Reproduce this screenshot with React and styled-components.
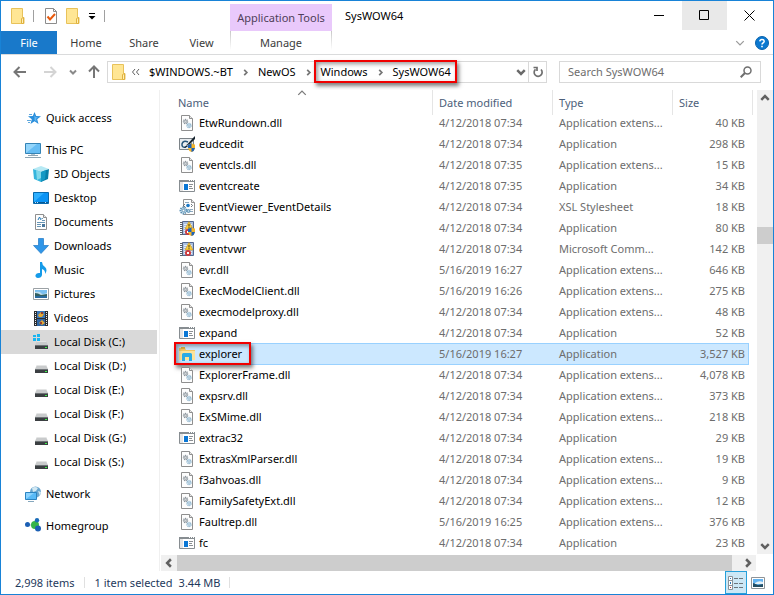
import styled, { createGlobalStyle, css } from "styled-components";

const files = [
  ["dll", "EtwRundown.dll", "4/12/2018 07:34", "Application extens...", "40 KB"],
  ["eudc", "eudcedit", "4/12/2018 07:34", "Application", "298 KB"],
  ["dll", "eventcls.dll", "4/12/2018 07:35", "Application extens...", "15 KB"],
  ["app", "eventcreate", "4/12/2018 07:35", "Application", "34 KB"],
  ["xsl", "EventViewer_EventDetails", "4/12/2018 07:34", "XSL Stylesheet", "18 KB"],
  ["eventShield", "eventvwr", "4/12/2018 07:34", "Application", "80 KB"],
  ["event", "eventvwr", "4/12/2018 07:34", "Microsoft Comm...", "142 KB"],
  ["dll", "evr.dll", "5/16/2019 16:27", "Application extens...", "646 KB"],
  ["dll", "ExecModelClient.dll", "5/16/2019 16:26", "Application extens...", "275 KB"],
  ["dll", "execmodelproxy.dll", "4/12/2018 07:34", "Application extens...", "48 KB"],
  ["app", "expand", "4/12/2018 07:34", "Application", "52 KB"],
  ["explorer", "explorer", "5/16/2019 16:27", "Application", "3,527 KB"],
  ["dll", "ExplorerFrame.dll", "4/12/2018 07:34", "Application extens...", "4,078 KB"],
  ["dll", "expsrv.dll", "4/12/2018 07:34", "Application extens...", "373 KB"],
  ["dll", "ExSMime.dll", "4/12/2018 07:34", "Application extens...", "218 KB"],
  ["app", "extrac32", "4/12/2018 07:34", "Application", "29 KB"],
  ["dll", "ExtrasXmlParser.dll", "4/12/2018 07:34", "Application extens...", "19 KB"],
  ["dll", "f3ahvoas.dll", "4/12/2018 07:34", "Application extens...", "9 KB"],
  ["dll", "FamilySafetyExt.dll", "4/12/2018 07:34", "Application extens...", "12 KB"],
  ["dll", "Faultrep.dll", "5/16/2019 16:25", "Application extens...", "376 KB"],
  ["app", "fc", "4/12/2018 07:34", "Application", "23 KB"],
];

const places = [
  [["star", "Quick access"]],
  [
    ["pc", "This PC"],
    ["cube", "3D Objects"],
    ["desktop", "Desktop"],
    ["document", "Documents"],
    ["download", "Downloads"],
    ["music", "Music"],
    ["picture", "Pictures"],
    ["video", "Videos"],
    ["system", "Local Disk (C:)"],
    ["disk", "Local Disk (D:)"],
    ["disk", "Local Disk (E:)"],
    ["disk", "Local Disk (F:)"],
    ["disk", "Local Disk (G:)"],
    ["disk", "Local Disk (S:)"],
  ],
  [["network", "Network"]],
  [["homegroup", "Homegroup"]],
];

const Shield = () => (
  <>
    <path d="M9 8.500q2 0 3.500-1.500 1.500 1.500 3.500 1.500v3.500q-.5 3-3.500 4-3-1-3.500-4z" fill="#f3b52b" />
    <path d="M12.500 7q-1.500 1.500-3.500 1.500V12h3.500zM12.500 12H16q-.5 3-3.500 4z" fill="#1f63b8" />
  </>
);

const EventLog = () => (
  <>
    <path d="M3.500 1.500h11v13h-11z" fill="#a9bfe0" stroke="#54678f" />
    <path d="M5 4.500h8M5 6.500h8M5 8.500h8M5 10.500h8M5 12.500h8" stroke="#e4edf9" />
    <path d="M1 2.500h3M1 4.500h3M1 6.500h3M1 8.500h3M1 10.500h3M1 12.500h3M1 14.500h3" stroke="#5b6069" />
    <path d="M10 1.500L14 9H6z" fill="#fbcf3b" stroke="#c99117" strokeWidth=".6" />
    <path d="M9.500 4h1v2.500h-1zM9.500 7.200h1v1h-1z" fill="#3c3112" />
    <circle cx="9" cy="12" r="3" fill="#cf3d3f" />
    <path d="M8 11l2 2M10 11l-2 2" stroke="#fff" />
  </>
);

const Drive = () => (
  <>
    <path d="M4 7h9l2 4H2z" fill="#c9cbcc" />
    <path d="M4 7h9l.5 1h-10z" fill="#e4e5e5" />
    <path d="M2 11h13v4H2z" fill="#3b3f42" />
    <path d="M2 11h13v1H2z" fill="#6e7376" />
    <path d="M12 13h2v1h-2z" fill="#3df24a" />
  </>
);

const Page = () => (
  <>
    <path d="M2.500.5h8l3 3v12h-11z" fill="#fdfdfd" stroke="#8f8f8f" />
    <path d="M10.500.5v3h3" fill="#e9e9e9" stroke="#8f8f8f" />
  </>
);

const artwork = {
  dll: (
    <>
      <Page />
      <circle cx="6.500" cy="6.500" r="2" fill="#d5d9dc" stroke="#8b949b" strokeDasharray="1 .6" strokeWidth="1.400" />
      <circle cx="6.500" cy="6.500" r=".8" fill="#fff" stroke="#8b949b" strokeWidth=".6" />
      <circle cx="10" cy="10.500" r="2" fill="#d8eaf5" stroke="#8db4cd" strokeDasharray="1 .6" strokeWidth="1.400" />
      <circle cx="10" cy="10.500" r=".8" fill="#fff" stroke="#7fa8c2" strokeWidth=".6" />
    </>
  ),
  app: (
    <>
      <path d="M.5 2.500h15v11H.5z" fill="#fff" stroke="#878d91" />
      <path d="M0 2h16v2H0z" fill="#878d91" />
      <path d="M10 2.500h1M12 2.500h1M14 2.500h1" stroke="#fff" />
      <path d="M1 4h3v9H1z" fill="#e5e5e5" />
      <path d="M5 6h4v6H5z" fill="#0a77d5" />
      <path d="M10 6.500h4M10 8.500h3M10 10.500h4" stroke="#8b8f93" />
    </>
  ),
  eudc: (
    <>
      <path d="M.5 2.500h14v11H.5z" fill="#e9edf0" stroke="#7c8388" />
      <path d="M9 6Q4 4 3 8q-.5 4 4 3" fill="none" stroke="#27567b" strokeWidth="1.500" />
      <path d="M5 12L14 2l2-2v3L8 11z" fill="#17242f" />
      <path d="M7 9l3 1" stroke="#8ca3b6" />
      <Shield />
    </>
  ),
  xsl: (
    <>
      <path d="M4.500.5h8l3 3v12h-11z" fill="#fdfdfd" stroke="#929292" />
      <path d="M12.500.5v3h3" fill="#e9e9e9" stroke="#929292" />
      <path d="M6 5l-1.500 1.500L6 8M12 5l1.500 1.500L12 8" fill="none" stroke="#4c555d" strokeWidth=".8" />
      <circle cx="9" cy="6.500" r="1.800" fill="#1978c8" />
      <path d="M11 10.500h3M11 12.500h3M6 3.500h4" stroke="#8ea9bf" />
      <circle cx="4.500" cy="11.500" r="3" fill="#dcebf5" stroke="#5b91b5" strokeDasharray="1.300 .8" strokeWidth="2" />
      <circle cx="4.500" cy="11.500" r="1.300" fill="#fff" stroke="#6698b8" />
      <circle cx="9.500" cy="12" r="1.500" fill="#b4d2e5" stroke="#5b91b5" />
    </>
  ),
  event: <EventLog />,
  eventShield: (
    <>
      <EventLog />
      <Shield />
    </>
  ),
  explorer: (
    <>
      <path d="M0 2h6l1 2h9v10H0z" fill="#f1c663" />
      <path d="M2 1h4v2H2z" fill="#e0ad3f" />
      <path d="M0 5h16v9H0z" fill="#fce39a" />
      <path d="M3 8.500q0-1.500 1.500-1.500h7q1.500 0 1.500 1.500V15h-3v-4H6v4H3z" fill="#29abe6" />
    </>
  ),
  star: (
    <>
      <path d="M9.500 2l1.700 4 4.800.2-3.800 3 1.300 4.800-4-2.700-4 2.700 1.300-4.800-3.800-3 4.800-.2z" fill="#2a8edb" />
      <path d="M9.500 5l1 2 2.500.2-2 1.600.7 2.700-2.200-1.600z" fill="#62b6f1" />
      <path d="M4 4.500h3M2 10.500h4M3 12.500h2" stroke="#62a9dd" />
    </>
  ),
  pc: (
    <>
      <path d="M.5 1.500h15v10H.5z" fill="#66bdf4" stroke="#3483b5" />
      <path d="M1 11V2h11z" fill="#93d5fb" />
      <path d="M6 12h4v2H6z" fill="#b3c5d0" />
      <path d="M3 13.500h10M0 15.500h16" stroke="#8ea5b3" />
    </>
  ),
  cube: (
    <>
      <path d="M0 3l8-3 8 3-8 3z" fill="#b6e9f4" />
      <path d="M0 3l8 3v10l-7-3z" fill="#35b5dc" />
      <path d="M16 3L8 6v10l7-3z" fill="#087fa8" />
      <path d="M3 4l5 2v6l-4 2z" fill="#7fd8ea" />
      <path d="M8 6l5-2-1 9-4 3z" fill="#1499c4" />
    </>
  ),
  desktop: (
    <>
      <path d="M.5 2.500h15v11H.5z" fill="#0b94f5" stroke="#0769ad" />
      <path d="M1 12V3h10z" fill="#2eb0ff" />
      <path d="M1 12h14v1H1z" fill="#075993" />
      <path d="M2 12h1v1H2zM4 12h1v1H4zM12 12h1v1h-1z" fill="#bfe5ff" />
    </>
  ),
  document: (
    <>
      <Page />
      <path d="M5 6l1.500-3L8 6" fill="none" stroke="#2478b5" />
      <path d="M8.500 4.500H10M9 6.500h3M4 8.500h8M4 10.500h4M4 12.500h4" stroke="#6795b5" />
      <path d="M9 10h3v3H9z" fill="#49779c" />
    </>
  ),
  download: <path d="M5.500.5h5v7h5L8 15.500.5 7.500h5z" fill="#2f96e8" stroke="#2078c4" strokeWidth=".7" />,
  music: (
    <path
      d="M7 0h2q0 3 3 5 3 3 0 7 .5-4-3-5v6q-.5 3-4 3-3-.5-2.500-3 1-2.500 4.500-2z"
      fill="#159be9"
    />
  ),
  picture: (
    <>
      <path d="M.5 2.500h15v11H.5z" fill="#fff" stroke="#9ba1a5" />
      <path d="M2 4h12v8H2z" fill="#79bff0" />
      <path d="M2 6q5-1 6 1t6 0v5H2z" fill="#bfdeee" />
      <path d="M2 7q3 0 6 2l6-1v2H2z" fill="#315f60" />
      <path d="M2 10h12v2H2z" fill="#28699e" />
    </>
  ),
  video: (
    <>
      <path d="M1 1h14v15H1z" fill="#2c2e31" />
      <path d="M4 1h8v7H4z" fill="#3976b8" />
      <path d="M4 9h8v7H4z" fill="#2f65a3" />
      <path d="M5 5l3-3 3 2-2 3H6zM6 13l3-3 3 3-3 2z" fill="#e2a835" />
      <path d="M8 2h2v2H8zM7 12h2v2H7z" fill="#9c3e2b" />
      <path d="M2.500 2v14M13.500 2v14" stroke="#eee" strokeDasharray="1 1" />
    </>
  ),
  disk: <Drive />,
  system: (
    <>
      <Drive />
      <path d="M0 1h3v2H0zM4 0h3v3H4zM0 4h3v3H0zM4 4h3v3H4z" fill="#18b5f1" />
    </>
  ),
  network: (
    <>
      <circle cx="10.500" cy="6" r="5.500" fill="#6aa6cf" />
      <path d="M7 2q3-2 6 0l-2 3-3 1zM13 5l3 1-1 4z" fill="#d3e9f3" />
      <path d="M.5 6.500h11v7H.5z" fill="#59baf7" stroke="#2b83c0" />
      <path d="M1 13V7h8z" fill="#8bd3ff" />
      <path d="M3 15.500h6" stroke="#85a7bd" />
    </>
  ),
  homegroup: (
    <>
      <path d="M3 7l7 0 2-5M10 7l3 5" stroke="#9bc9d6" fill="none" />
      <circle cx="10" cy="7" r="4" fill="#36b44a" />
      <circle cx="2.500" cy="6.500" r="2.500" fill="#1b5fb4" />
      <circle cx="12" cy="2.200" r="2.200" fill="#1a6cb8" />
      <circle cx="13" cy="10.500" r="3" fill="#1b5fb4" />
    </>
  ),
};

function Icon({ name }) {
  return (
    <IconBox viewBox="0 0 16 16" aria-hidden="true">
      {artwork[name]}
    </IconBox>
  );
}

function FolderIcon() {
  return (
    <FolderSvg viewBox="0 0 14 16" aria-hidden="true">
      <path d="M.5.5h11v9h1.500v6H.5z" fill="#ffe694" stroke="#e8c25a" />
      <path d="M10.500 15.500v-5l2-1v6z" fill="#fff0b8" stroke="#e0b23e" />
    </FolderSvg>
  );
}

function Chevron({ turn = 0, size = 8, color = "#606060", weight = 2 }) {
  return (
    <svg width={size} height={size} viewBox="0 0 8 8" aria-hidden="true">
      <path
        d="M1 2.500l3 3 3-3"
        fill="none"
        stroke={color}
        strokeWidth={weight}
        transform={`rotate(${turn} 4 4)`}
      />
    </svg>
  );
}

function TitleBar() {
  return (
    <Header>
      <QuickBar>
        <FolderIcon />
        <Divider />
        <ToolButton aria-label="Properties">
          <svg width="14" height="16" viewBox="0 0 14 16">
            <path d="M1.500.5h8l3 3v12h-11z" fill="#fff" stroke="#8c8c8c" />
            <path d="M9.500.5v3h3" fill="none" stroke="#8c8c8c" />
            <path d="M3.500 8.500l2.500 3 5-5.500" fill="none" stroke="#e8590c" strokeWidth="2" />
          </svg>
        </ToolButton>
        <ToolButton aria-label="New folder">
          <FolderIcon />
        </ToolButton>
        <ToolButton aria-label="Customize toolbar">
          <svg width="8" height="8" viewBox="0 0 8 8">
            <path d="M1 1.500h6" stroke="#000" />
            <path d="M.5 4h7L4 7.500z" />
          </svg>
        </ToolButton>
        <Divider />
      </QuickBar>
      <ToolsTab>Application Tools</ToolsTab>
      <Title>SysWOW64</Title>
      <WindowButton aria-label="Minimize">
        <svg width="11" height="11" viewBox="0 0 11 11">
          <path d="M0 5.500h10" stroke="#000" />
        </svg>
      </WindowButton>
      <WindowButton aria-label="Maximize" $hover>
        <svg width="11" height="11" viewBox="0 0 11 11">
          <path d="M.5.5h9v9h-9z" fill="none" stroke="#000" />
        </svg>
      </WindowButton>
      <WindowButton aria-label="Close">
        <svg width="11" height="11" viewBox="0 0 11 11">
          <path d="M.5.5l10 10M10.500.5l-10 10" stroke="#000" />
        </svg>
      </WindowButton>
    </Header>
  );
}

function Ribbon() {
  return (
    <RibbonBar>
      <Tab $file>File</Tab>
      <Tab>Home</Tab>
      <Tab>Share</Tab>
      <Tab>View</Tab>
      <Tab $tools>Manage</Tab>
      <RibbonEnd>
        <ToolButton aria-label="Expand ribbon">
          <Chevron color="#9a9a9a" size={10} weight={1} />
        </ToolButton>
        <ToolButton aria-label="Help">
          <svg width="14" height="14" viewBox="0 0 14 14">
            <circle cx="7" cy="7" r="6.500" fill="#0b78d0" stroke="#0a62ab" />
            <path d="M4.800 5.300Q5 3.400 7 3.400t2.200 1.800Q9.200 6.200 8 7q-1 .6-1 1.600" fill="none" stroke="#fff" strokeWidth="1.500" />
            <path d="M6.200 9.700h1.600v1.500H6.200z" fill="#fff" />
          </svg>
        </ToolButton>
      </RibbonEnd>
    </RibbonBar>
  );
}

function Navigation() {
  return (
    <NavBar>
      <Arrows>
        <ToolButton aria-label="Back">
          <svg width="14" height="12" viewBox="0 0 14 12">
            <path d="M13 6H2M6.500 1l-5 5 5 5" fill="none" stroke="#767676" strokeWidth="2" />
          </svg>
        </ToolButton>
        <ToolButton aria-label="Forward">
          <svg width="14" height="12" viewBox="0 0 14 12">
            <path d="M1 6h11M7.500 1l5 5-5 5" fill="none" stroke="#d4d4d4" strokeWidth="2" />
          </svg>
        </ToolButton>
        <ToolButton aria-label="Recent locations">
          <Chevron color="#8a8a8a" />
        </ToolButton>
        <ToolButton aria-label="Up">
          <svg width="12" height="14" viewBox="0 0 12 14">
            <path d="M6 13V2M1 6.500l5-5 5 5" fill="none" stroke="#767676" strokeWidth="2" />
          </svg>
        </ToolButton>
      </Arrows>
      <Address>
        <FolderIcon />
        <Crumbs>
          <svg width="9" height="8" viewBox="0 0 9 8" aria-hidden="true">
            <path d="M4 1L1.500 4 4 7M8 1L5.500 4 8 7" fill="none" stroke="#606060" />
          </svg>
          <Crumb>$WINDOWS.~BT</Crumb>
          <Chevron turn={-90} size={7} color="#757575" />
          <Crumb>NewOS</Crumb>
          <Chevron turn={-90} size={7} color="#757575" />
          <MarkedCrumbs>
            <Crumb>Windows</Crumb>
            <Chevron turn={-90} size={7} color="#757575" />
            <Crumb>SysWOW64</Crumb>
            <Outline />
          </MarkedCrumbs>
        </Crumbs>
        <ToolButton aria-label="Previous locations">
          <Chevron size={10} color="#6a6a6a" />
        </ToolButton>
        <Refresh aria-label="Refresh">
          <svg width="12" height="12" viewBox="0 0 12 12">
            <path d="M9 3.500a4 4 0 1 1-5.500-.2M1.500 1.500h3.500V5" fill="none" stroke="#6f6f6f" strokeWidth="1.700" />
          </svg>
        </Refresh>
      </Address>
      <Search>
        <SearchInput aria-label="Search SysWOW64" placeholder="Search SysWOW64" />
        <svg width="12" height="12" viewBox="0 0 12 12" aria-hidden="true">
          <circle cx="7.500" cy="4.500" r="3.500" fill="none" stroke="#6f6f6f" strokeWidth="1.500" />
          <path d="M5 7L.7 11.300" stroke="#6f6f6f" strokeWidth="2" />
        </svg>
      </Search>
    </NavBar>
  );
}

function Sidebar() {
  return (
    <Side>
      {places.map((group) => (
        <PlaceGroup key={group[0][1]}>
          {group.map(([icon, label], index) => (
            <li key={label}>
              <Place href="#" $nested={index > 0} $current={icon === "system"}>
                <Icon name={icon} />
                <span>{label}</span>
              </Place>
            </li>
          ))}
        </PlaceGroup>
      ))}
    </Side>
  );
}

function FileTable() {
  return (
    <Table>
      <thead>
        <HeadRow>
          <HeadCell $first>
            Name
            <SortMark>
              <Chevron turn={180} size={10} color="#7a7a7a" weight={1} />
            </SortMark>
          </HeadCell>
          <HeadCell>Date modified</HeadCell>
          <HeadCell>Type</HeadCell>
          <HeadCell>Size</HeadCell>
        </HeadRow>
      </thead>
      <tbody>
        {files.map(([icon, name, date, type, size], index) => (
          <FileRow key={index} $selected={name === "explorer"}>
            <NameCell>
              <Icon name={icon} />
              <span>{name}</span>
              {name === "explorer" && <Outline $row />}
            </NameCell>
            <Cell>{date}</Cell>
            <Cell>{type}</Cell>
            <Cell $right>{size}</Cell>
          </FileRow>
        ))}
      </tbody>
    </Table>
  );
}

function App() {
  return (
    <>
      <GlobalStyle />
      <Window>
        <TitleBar />
        <Ribbon />
        <Navigation />
        <Body>
          <Sidebar />
          <Pane>
            <FileTable />
            <VerticalBar>
              <ScrollButton aria-label="Scroll up">
                <Chevron turn={180} size={10} />
              </ScrollButton>
              <Gap $grow={120} />
              <Thumb $tall />
              <Gap $grow={293} />
              <ScrollButton aria-label="Scroll down">
                <Chevron size={10} />
              </ScrollButton>
            </VerticalBar>
            <HorizontalBar>
              <ScrollButton aria-label="Scroll left">
                <Chevron turn={90} size={10} />
              </ScrollButton>
              <Thumb />
              <Gap $size={8} />
              <ScrollButton aria-label="Scroll right">
                <Chevron turn={-90} size={10} />
              </ScrollButton>
            </HorizontalBar>
          </Pane>
        </Body>
        <Status>
          <StatusPart>2,998 items</StatusPart>
          <StatusPart>
            <span>1 item selected</span>
            <span>3.44 MB</span>
          </StatusPart>
          <ViewButtons>
            <ViewButton aria-label="Details" $active>
              <svg width="16" height="14" viewBox="0 0 16 14">
                <path d="M.5.5h4v13h-4zM.5 4.500h4M.5 9.500h4" fill="#fff" stroke="#8b9298" />
                <path d="M2 2h1v1H2zM2 6h1v2H2z" fill="#2d78b5" />
                <path d="M2 11h1v1H2z" fill="#b33c3c" />
                <path d="M6 2.500h4M11 2.500h4M6 7.500h4M11 7.500h4M6 11.500h4M11 11.500h4" stroke="#6d767c" />
              </svg>
            </ViewButton>
            <ViewButton aria-label="Large icons">
              <svg width="14" height="12" viewBox="0 0 14 12">
                <path d="M.5.5h13v11H.5z" fill="#fff" stroke="#8f9498" />
                <path d="M2 2h10v8H2z" fill="#64b3f0" />
                <path d="M4 6q4-3 8-1v2H4z" fill="#e5f1f7" />
                <path d="M2 6l5 2 5-1v3H2z" fill="#234d63" />
              </svg>
            </ViewButton>
          </ViewButtons>
        </Status>
      </Window>
    </>
  );
}

const GlobalStyle = createGlobalStyle`
  * {
    box-sizing: border-box;
  }
  body {
    margin: 0;
    background: #fff;
    color: #000;
    font-family: "Noto Sans", "Open Sans", sans-serif;
    font-size: 11px;
    line-height: 16px;
  }
  button, input {
    font: inherit;
    color: inherit;
    border: 0;
    padding: 0;
    background: none;
  }
  ul {
    list-style: none;
    margin: 0;
    padding: 0;
  }
  svg {
    display: block;
    flex: none;
  }
`;

const Window = styled.div`
  display: flex;
  flex-direction: column;
  min-height: 100vh;
  border: 1px solid #1883d7;
`;
const Header = styled.header`
  display: flex;
  height: 30px;
  padding-right: 1px;
`;
const QuickBar = styled.div`
  display: flex;
  align-items: center;
  gap: 8px;
  width: 229px;
  padding-left: 10px;
`;
const Divider = styled.span`
  width: 1px;
  height: 12px;
  margin-right: 2px;
  background: #a0a0a0;
`;
const ToolButton = styled.button`
  display: flex;
  align-items: center;
  justify-content: center;
`;
const IconBox = styled.svg`
  width: 16px;
  height: 16px;
`;
const FolderSvg = styled.svg`
  width: 14px;
  height: 16px;
`;
const ToolsTab = styled.div`
  width: 102px;
  margin-top: 3px;
  padding-top: 6px;
  text-align: center;
  white-space: nowrap;
  background: #e9c9fb;
  color: #4f4059;
`;
const Title = styled.div`
  flex: 1;
  padding: 7px 13px;
`;
const WindowButton = styled.button`
  display: flex;
  align-items: center;
  justify-content: center;
  width: 45px;
  height: 29px;
  background: ${({ $hover }) => ($hover ? "#e9e9e9" : "none")};
`;
const RibbonBar = styled.nav`
  display: grid;
  grid-template-columns: 56px 58px 58px 57px 102px 1fr;
  height: 24px;
  border-bottom: 1px solid #dadbdc;
`;
const Tab = styled.button`
  color: #3b3b3b;
  ${({ $file }) =>
    $file &&
    css`
      background: #1979ca;
      color: #fff;
    `}
  ${({ $tools }) =>
    $tools &&
    css`
      border: solid transparent;
      border-width: 0 1px;
      border-image: linear-gradient(#c4c4c4, #fff 80%) 1;
    `}
`;
const RibbonEnd = styled.div`
  display: flex;
  align-items: center;
  justify-content: flex-end;
  gap: 10px;
  padding-right: 4px;
`;
const NavBar = styled.div`
  display: flex;
  height: 35px;
  padding: 6px 12px 7px 0;
`;
const Arrows = styled.div`
  display: grid;
  grid-template-columns: 30px 29px 18px 24px;
  width: 106px;
  padding-left: 4px;
`;
const Address = styled.div`
  display: flex;
  align-items: center;
  flex: 1;
  padding-left: 4px;
  border: 1px solid #d9d9d9;
`;
const Crumbs = styled.div`
  display: flex;
  align-items: center;
  gap: 9px;
  flex: 1;
  padding-left: 5px;
`;
const Crumb = styled.span`
  white-space: nowrap;
`;
const MarkedCrumbs = styled.div`
  position: relative;
  display: flex;
  align-items: center;
  gap: 9px;
`;
const Outline = styled.span`
  position: absolute;
  inset: -4px -6px -3px -7px;
  border: 2px solid #f00000;
  box-shadow: 2px 3px 4px rgba(0, 0, 0, 0.5), inset 2px 2px 4px rgba(0, 0, 0, 0.4);
  ${({ $row }) =>
    $row &&
    css`
      inset: -1px auto 0 -1px;
      width: 77px;
    `}
`;
const Refresh = styled(ToolButton)`
  align-self: stretch;
  width: 18px;
  margin-left: 2px;
  border-left: 1px solid #d9d9d9;
`;
const Search = styled.div`
  display: flex;
  align-items: center;
  width: 202px;
  margin-left: 12px;
  padding: 0 8px;
  border: 1px solid #d9d9d9;
`;
const SearchInput = styled.input`
  flex: 1;
  min-width: 0;
  outline: 0;
  &::placeholder {
    color: #6d6d6d;
    opacity: 1;
  }
`;
const Body = styled.div`
  display: flex;
  flex: 1;
`;
const Side = styled.nav`
  width: 159px;
  padding: 16px 2px 0 0;
  border-right: 1px solid #f0f0f0;
`;
const PlaceGroup = styled.ul`
  margin-bottom: 8px;
`;
const Place = styled.a`
  display: flex;
  align-items: center;
  gap: 5px;
  height: 24px;
  padding-left: ${({ $nested }) => ($nested ? "32px" : "24px")};
  color: inherit;
  text-decoration: none;
  white-space: nowrap;
  background: ${({ $current }) => ($current ? "#d9d9d9" : "none")};
`;
const Pane = styled.main`
  display: grid;
  flex: 1;
  grid-template-columns: minmax(0, 1fr) 16px;
  grid-template-rows: 1fr 16px;
  row-gap: 1px;
  padding-left: 1px;
`;
const columns = css`
  display: grid;
  grid-template-columns: minmax(0, 1fr) 120px 120px 80px;
`;
const Table = styled.table`
  display: block;
  thead,
  tbody {
    display: block;
  }
`;
const HeadRow = styled.tr`
  ${columns}
  position: relative;
  z-index: 1;
  height: 25px;
  margin: 0 4px -3px 0;
  background: #fff;
`;
const HeadCell = styled.th`
  padding: 5px 6px 0 ${({ $first }) => ($first ? "17px" : "6px")};
  border-right: 1px solid #e5e5e5;
  color: #4c607a;
  font-weight: 400;
  text-align: left;
`;
const SortMark = styled.span`
  position: absolute;
  top: -2px;
  left: 136px;
`;
const FileRow = styled.tr`
  ${columns}
  height: 21px;
  margin: 0 4px 0 14px;
  ${({ $selected }) =>
    $selected &&
    css`
      height: 22px;
      margin: 0 8px -1px 14px;
      grid-template-columns: minmax(0, 1fr) 120px 120px 76px;
      background: #cce8ff;
      box-shadow: inset 0 0 0 1px #99d1ff;
      ${Cell}:last-child {
        padding-right: 4px;
      }
    `}
`;
const Cell = styled.td`
  padding: 3px 6px 2px;
  color: #6d6d6d;
  white-space: nowrap;
  ${({ $right }) =>
    $right &&
    css`
      padding: 3px 8px 2px 0;
      text-align: right;
    `}
`;
const NameCell = styled.td`
  position: relative;
  display: flex;
  align-items: center;
  gap: 4px;
  padding: 0 4px;
`;
const VerticalBar = styled.div`
  display: flex;
  flex-direction: column;
  background: #f0f0f0;
`;
const HorizontalBar = styled.div`
  display: flex;
  margin-right: 1px;
  background: #f0f0f0;
`;
const ScrollButton = styled.button`
  display: flex;
  align-items: center;
  justify-content: center;
  min-width: 16px;
  height: 16px;
`;
const Gap = styled.span`
  flex: ${({ $grow, $size }) => ($grow ? `${$grow} 0 0` : `0 0 ${$size}px`)};
`;
const Thumb = styled.span`
  flex: ${({ $tall }) => ($tall ? "0 0 17px" : "1")};
  background: #cdcdcd;
`;
const Status = styled.footer`
  display: flex;
  height: 23px;
  color: #1e395b;
`;
const StatusPart = styled.div`
  display: flex;
  gap: 6px;
  padding: 4px 10px 0;
  position: relative;
  &:first-child {
    padding-left: 14px;
  }
  &::after {
    content: "";
    position: absolute;
    top: 6px;
    right: 0;
    height: 11px;
    border-right: 1px solid #e0e0e0;
  }
`;
const ViewButtons = styled.div`
  display: flex;
  margin-left: auto;
  padding-right: 4px;
`;
const ViewButton = styled.button`
  display: flex;
  align-items: center;
  justify-content: center;
  width: 22px;
  ${({ $active }) =>
    $active &&
    css`
      background: #cce8f6;
      border: 1px solid #26a0da;
    `}
`;

export default App;
